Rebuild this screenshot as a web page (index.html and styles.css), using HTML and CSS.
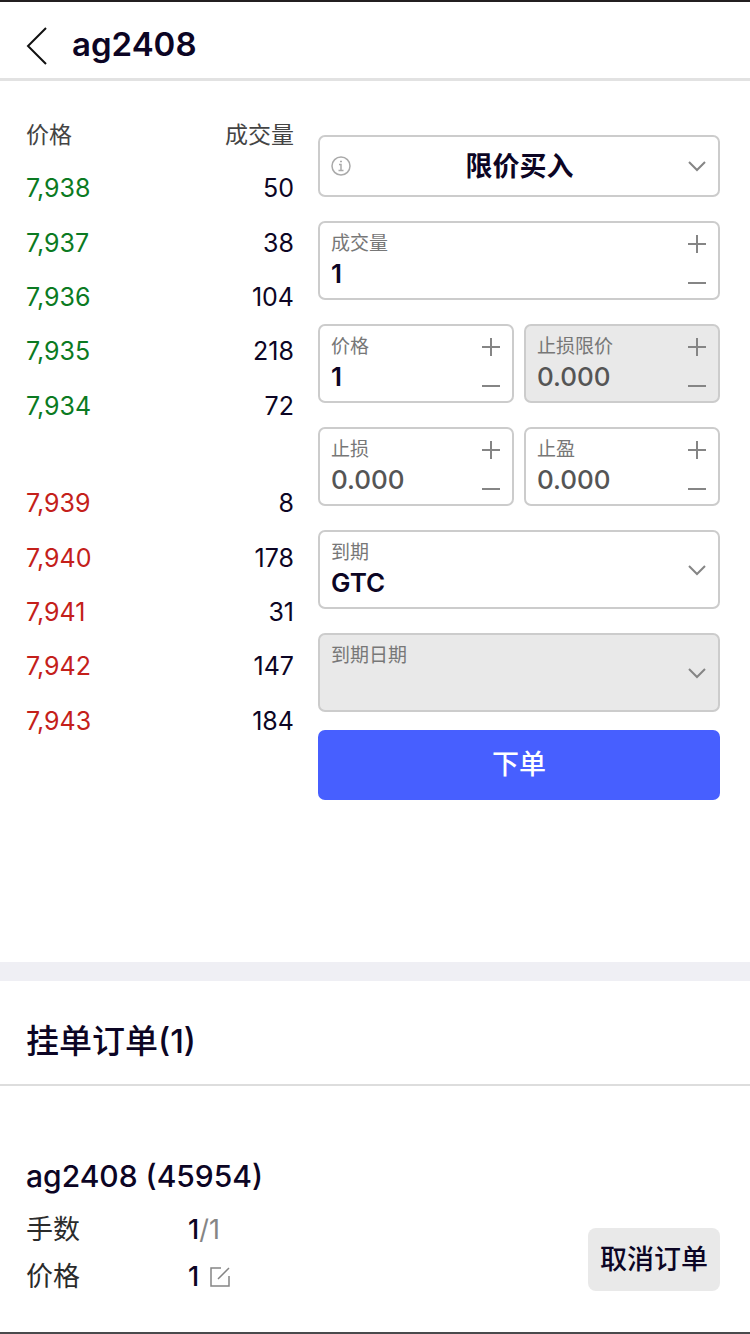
FILE: index.html
```html
<!DOCTYPE html>
<html lang="zh-CN">
<head>
    <meta charset="UTF-8">
    <meta name="viewport" content="width=device-width, initial-scale=1.0">
    <title>ag2408</title>
    <link rel="stylesheet" href="styles.css">
</head>
<body>
    <svg class="sprite" aria-hidden="true">
        <symbol id="chevron" viewBox="0 0 18 18"><path d="M1 5l8 8 8-8"/></symbol>
        <symbol id="plus" viewBox="0 0 18 18"><path d="M0 9h18M9 0v18"/></symbol>
        <symbol id="minus" viewBox="0 0 18 18"><path d="M0 9h18"/></symbol>
    </svg>

    <header class="topbar">
        <button type="button" class="back" aria-label="返回">
            <svg width="22" height="40" viewBox="0 0 22 40"><path d="M20 2L2 20l18 18"/></svg>
        </button>
        <h1>ag2408</h1>
    </header>

    <main class="trade">
        <section class="book">
            <table class="quotes bids">
                <thead>
                    <tr><th scope="col">价格</th><th scope="col">成交量</th></tr>
                </thead>
                <tbody>
                    <tr><td>7,938</td><td>50</td></tr>
                    <tr><td>7,937</td><td>38</td></tr>
                    <tr><td>7,936</td><td>104</td></tr>
                    <tr><td>7,935</td><td>218</td></tr>
                    <tr><td>7,934</td><td>72</td></tr>
                </tbody>
            </table>
            <table class="quotes asks">
                <tbody>
                    <tr><td>7,939</td><td>8</td></tr>
                    <tr><td>7,940</td><td>178</td></tr>
                    <tr><td>7,941</td><td>31</td></tr>
                    <tr><td>7,942</td><td>147</td></tr>
                    <tr><td>7,943</td><td>184</td></tr>
                </tbody>
            </table>
        </section>

        <form class="order-form">
            <div class="field field-type">
                <svg class="info" viewBox="0 0 20 20" aria-hidden="true"><circle cx="10" cy="10" r="9"/><path d="M8 8.5h2v6M7.5 14.5h5M9 5.5h2"/></svg>
                <select aria-label="订单类型">
                    <option>限价买入</option>
                </select>
                <svg class="icon"><use href="#chevron"/></svg>
            </div>

            <div class="field">
                <div class="entry">
                    <label for="volume">成交量</label>
                    <input type="text" id="volume" value="1">
                </div>
                <div class="stepper">
                    <button type="button" aria-label="增加"><svg class="icon"><use href="#plus"/></svg></button>
                    <button type="button" aria-label="减少"><svg class="icon"><use href="#minus"/></svg></button>
                </div>
            </div>

            <div class="pair">
                <div class="field">
                    <div class="entry">
                        <label for="price">价格</label>
                        <input type="text" id="price" value="1">
                    </div>
                    <div class="stepper">
                        <button type="button" aria-label="增加"><svg class="icon"><use href="#plus"/></svg></button>
                        <button type="button" aria-label="减少"><svg class="icon"><use href="#minus"/></svg></button>
                    </div>
                </div>
                <div class="field disabled">
                    <div class="entry">
                        <label for="stopLimit">止损限价</label>
                        <input type="text" id="stopLimit" class="empty" value="0.000" disabled>
                    </div>
                    <div class="stepper">
                        <button type="button" aria-label="增加" disabled><svg class="icon"><use href="#plus"/></svg></button>
                        <button type="button" aria-label="减少" disabled><svg class="icon"><use href="#minus"/></svg></button>
                    </div>
                </div>
            </div>

            <div class="pair">
                <div class="field">
                    <div class="entry">
                        <label for="stopLoss">止损</label>
                        <input type="text" id="stopLoss" class="empty" value="0.000">
                    </div>
                    <div class="stepper">
                        <button type="button" aria-label="增加"><svg class="icon"><use href="#plus"/></svg></button>
                        <button type="button" aria-label="减少"><svg class="icon"><use href="#minus"/></svg></button>
                    </div>
                </div>
                <div class="field">
                    <div class="entry">
                        <label for="takeProfit">止盈</label>
                        <input type="text" id="takeProfit" class="empty" value="0.000">
                    </div>
                    <div class="stepper">
                        <button type="button" aria-label="增加"><svg class="icon"><use href="#plus"/></svg></button>
                        <button type="button" aria-label="减少"><svg class="icon"><use href="#minus"/></svg></button>
                    </div>
                </div>
            </div>

            <div class="field">
                <div class="entry">
                    <label for="expiry">到期</label>
                    <select id="expiry">
                        <option>GTC</option>
                    </select>
                </div>
                <svg class="icon"><use href="#chevron"/></svg>
            </div>

            <div class="field disabled">
                <div class="entry">
                    <label for="expiryDate">到期日期</label>
                    <select id="expiryDate" disabled>
                        <option></option>
                    </select>
                </div>
                <svg class="icon"><use href="#chevron"/></svg>
            </div>

            <button type="submit" class="submit">下单</button>
        </form>
    </main>

    <section class="pending">
        <h2>挂单订单(1)</h2>
        <article class="order">
            <h3>ag2408 (45954)</h3>
            <div class="order-body">
                <dl>
                    <dt>手数</dt>
                    <dd><span>1<span class="total">/1</span></span></dd>
                    <dt>价格</dt>
                    <dd>1
                        <button type="button" class="edit" aria-label="修改价格">
                            <svg width="22" height="22" viewBox="0 0 22 22"><path d="M12 2H2v18h18V10M9 13L20 2"/></svg>
                        </button>
                    </dd>
                </dl>
                <button type="button" class="cancel">取消订单</button>
            </div>
        </article>
    </section>
</body>
</html>
```
FILE: styles.css
```css
* {
    box-sizing: border-box;
}
body {
    display: flex;
    flex-direction: column;
    min-height: 100vh;
    margin: 0;
    border-top: 2px solid #231f20;
    border-bottom: 2px solid #4a4a4c;
    background-color: #fff;
    color: #0c0524;
    font-family: Inter, "Noto Sans CJK SC", sans-serif;
    font-size: 25px;
}
h1, h2, h3, dl, dd {
    margin: 0;
}
button, input, select {
    padding: 0;
    border: none;
    background: none;
    color: inherit;
    font: inherit;
}
button {
    cursor: pointer;
}
svg {
    display: block;
    fill: none;
    stroke: #858585;
    stroke-width: 2;
}
.sprite {
    position: absolute;
    width: 0;
    height: 0;
}

/* Top bar */
.topbar {
    display: flex;
    align-items: center;
    gap: 24px;
    height: 79px;
    padding: 12px 26px 0;
    border-bottom: 3px solid #e2e2e2;
}
.topbar h1 {
    padding-bottom: 4px;
    font-size: 33px;
    font-weight: 600;
    line-height: 40px;
}
.back svg {
    stroke: #111;
}

/* Quotes on the left, order form on the right */
.trade {
    display: grid;
    grid-template-columns: 2fr 3fr;
    gap: 24px;
    padding: 24px 30px 0 26px;
    height: 881px;
}
.quotes {
    width: 100%;
    border-collapse: collapse;
}
.bids {
    height: 328px;
}
.asks {
    height: 272px;
    margin-top: 43px;
}
.quotes th {
    height: 56px;
    color: #444;
    font-size: 23px;
    font-weight: 400;
}
.quotes th,
.quotes td {
    padding: 0;
    text-align: left;
}
.quotes th:last-child,
.quotes td:last-child {
    text-align: right;
}
.bids td:first-child {
    color: #0b7a22;
}
.asks td:first-child {
    color: #c4201a;
}

/* Order form */
.order-form {
    display: flex;
    flex-direction: column;
    gap: 24px;
    padding-top: 30px;
}
.pair {
    display: grid;
    grid-template-columns: 1fr 1fr;
    gap: 10px;
}
.field {
    display: flex;
    align-items: center;
    gap: 8px;
    height: 79px;
    padding: 0 12px 0 11px;
    border: 2px solid #ccc;
    border-radius: 7px;
}
.field.disabled {
    background-color: #e9e9e9;
}
.entry {
    flex: 1;
    min-width: 0;
    padding-bottom: 2px;
}
.entry label {
    display: block;
    color: #777;
    font-size: 19px;
    line-height: 28px;
}
.entry input,
.entry select {
    display: block;
    width: 100%;
    height: 32px;
    font-size: 26px;
    font-weight: 600;
}
.entry .empty {
    color: #555;
    font-weight: 500;
}
select {
    appearance: none;
    opacity: 1;
}
.icon {
    width: 18px;
    height: 18px;
    flex: none;
}
.stepper {
    display: flex;
    flex-direction: column;
    gap: 21px;
    padding-top: 6px;
}
.field-type {
    height: 62px;
}
.field-type select {
    flex: 1;
    height: 40px;
    font-size: 27px;
    font-weight: 600;
    text-align: center;
    text-align-last: center;
}
.info {
    width: 20px;
    height: 20px;
    stroke: #aaa;
    stroke-width: 1.5;
}
.submit {
    height: 70px;
    margin-top: -6px;
    padding-bottom: 6px;
    border-radius: 7px;
    background-color: #475fff;
    color: #fff;
    font-size: 27px;
    font-weight: 500;
}

/* Pending orders */
.pending {
    flex: 1;
    border-top: 19px solid #efeff4;
}
.pending h2 {
    padding: 36px 26px 19px;
    border-bottom: 2px solid #ddd;
    font-size: 33px;
    font-weight: 500;
    line-height: 48px;
}
.order {
    padding: 68px 30px 0 26px;
}
.order h3 {
    font-size: 30px;
    font-weight: 500;
    line-height: 44px;
}
.order-body {
    display: flex;
    justify-content: space-between;
    align-items: flex-end;
}
.order dl {
    display: grid;
    grid-template-columns: 162px auto;
    padding-top: 8px;
    font-size: 27px;
    line-height: 47px;
}
.order dt {
    color: #2b2b2b;
}
.order dd {
    display: flex;
    align-items: center;
    gap: 10px;
    font-weight: 500;
}
.order .total {
    color: #858585;
    font-weight: 400;
}
.edit svg {
    stroke-width: 1.5;
}
.cancel {
    height: 63px;
    margin-bottom: 9px;
    padding: 0 12px 4px;
    border-radius: 8px;
    background-color: #e9e9e9;
    font-size: 27px;
    font-weight: 500;
}
```
